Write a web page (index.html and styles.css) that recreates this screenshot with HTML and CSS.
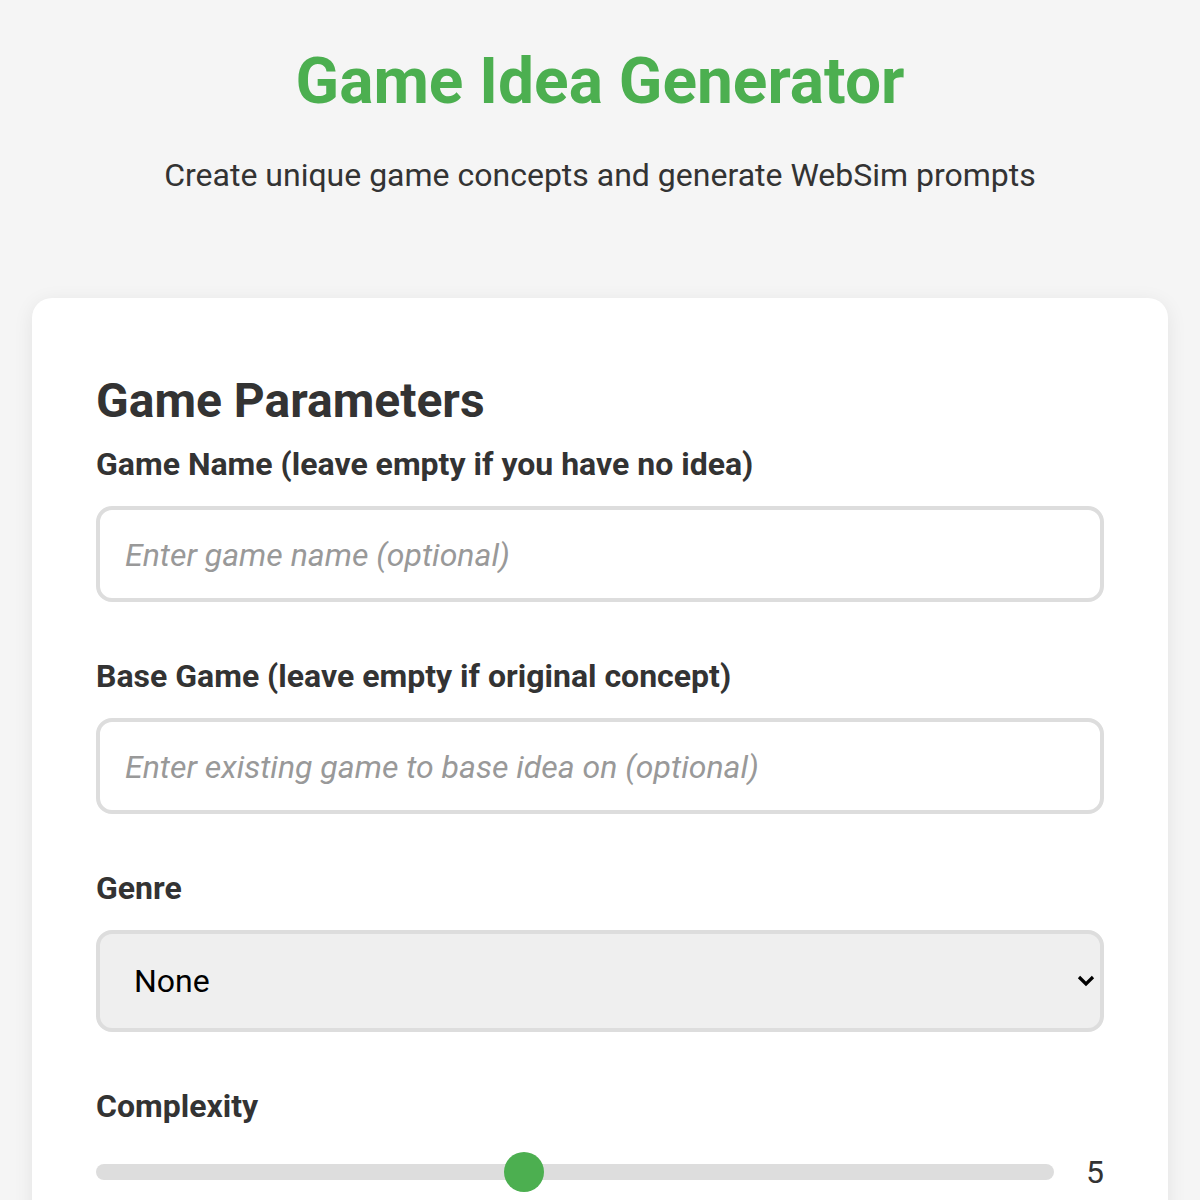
FILE: index.html
```html
<!DOCTYPE html>
<html>
<head>
    <title>Game Idea Generator</title>
    <link rel="stylesheet" href="styles.css">
</head>
<body>
    <div class="container">
        <header class="page-header">
            <h1>Game Idea Generator</h1>
            <p class="subtitle">Create unique game concepts and generate WebSim prompts</p>
        </header>

        <section class="card">
            <h2>Game Parameters</h2>

            <div class="form-group">
                <label for="gameName">Game Name (leave empty if you have no idea)</label>
                <input type="text" id="gameName" placeholder="Enter game name (optional)">
            </div>

            <div class="form-group">
                <label for="baseGame">Base Game (leave empty if original concept)</label>
                <input type="text" id="baseGame" placeholder="Enter existing game to base idea on (optional)">
            </div>

            <div class="form-group">
                <label for="genre">Genre</label>
                <div class="select-wrap">
                    <select id="genre">
                        <option>None</option>
                        <option>Action</option>
                        <option>Puzzle</option>
                        <option>RPG</option>
                        <option>Strategy</option>
                    </select>
                    <svg class="select-arrow" width="18" height="12" viewBox="0 0 18 12">
                        <path d="M2 2 L9 9 L16 2" fill="none" stroke="#000" stroke-width="3.2"/>
                    </svg>
                </div>
            </div>

            <div class="form-group">
                <label for="complexity">Complexity</label>
                <div class="range-row">
                    <input type="range" id="complexity" min="1" max="10" value="5">
                    <span class="range-value" id="complexityValue">5</span>
                </div>
            </div>
        </section>
    </div>

    <script>
        document.getElementById('complexity').addEventListener('input', function () {
            document.getElementById('complexityValue').innerText = this.value;
        });
    </script>
</body>
</html>
```

FILE: styles.css
```css
body {
    font-family: Roboto, "Liberation Sans", sans-serif;
    background-color: #f5f5f5;
    color: #333;
    margin: 0;
    padding: 0;
}

.container {
    padding: 0 32px;
}

.page-header {
    text-align: center;
    padding-top: 42px;
    margin-bottom: 103px;
}

h1 {
    color: #4CAF50;
    font-size: 64px;
    font-weight: 700;
    margin: 0;
    line-height: 80px;
}

.subtitle {
    font-size: 32px;
    margin: 33px 0 0;
    line-height: 40px;
    color: #333;
}

.card {
    background-color: #fff;
    border-radius: 20px;
    box-shadow: 0 4px 20px rgba(0, 0, 0, 0.08);
    padding: 75px 64px 40px;
}

h2 {
    font-size: 48px;
    font-weight: 700;
    margin: 0 0 15px;
    line-height: 56px;
    color: #333;
}

.form-group {
    margin-bottom: 54px;
}

label {
    display: block;
    font-size: 32px;
    font-weight: 700;
    line-height: 40px;
    margin-bottom: 22px;
}

input[type="text"] {
    display: block;
    width: 100%;
    height: 96px;
    box-sizing: border-box;
    padding: 2px 25px 0;
    font-family: inherit;
    font-size: 32px;
    border: 4px solid #ddd;
    border-radius: 16px;
    color: #333;
    outline: none;
}

input[type="text"]::placeholder {
    color: #999;
    font-style: italic;
}

.select-wrap {
    position: relative;
}

select {
    display: block;
    width: 100%;
    height: 102px;
    box-sizing: border-box;
    padding: 0 34px;
    font-family: inherit;
    font-size: 32px;
    color: #000;
    background-color: #efefef;
    border: 4px solid #ddd;
    border-radius: 16px;
    appearance: none;
    -webkit-appearance: none;
    outline: none;
}

.select-arrow {
    position: absolute;
    right: 9px;
    top: 45px;
    pointer-events: none;
}

.range-row {
    display: flex;
    align-items: center;
    gap: 32px;
    padding-top: 4px;
}

input[type="range"] {
    flex: 1;
    margin: 0;
    height: 40px;
    background: transparent;
    -webkit-appearance: none;
    appearance: none;
}

input[type="range"]::-webkit-slider-runnable-track {
    height: 16px;
    background-color: #ddd;
    border-radius: 8px;
}

input[type="range"]::-webkit-slider-thumb {
    -webkit-appearance: none;
    width: 40px;
    height: 40px;
    border-radius: 50%;
    background-color: #4CAF50;
    margin-top: -12px;
    cursor: pointer;
}

.range-value {
    font-size: 32px;
    min-width: 18px;
    text-align: right;
}
```
